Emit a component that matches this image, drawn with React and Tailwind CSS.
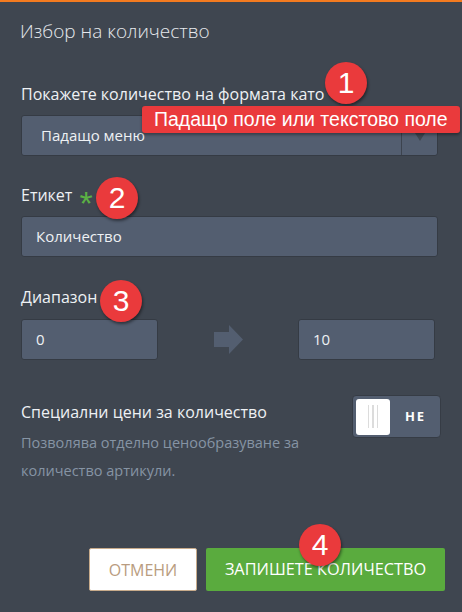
import React from "react";

function Badge({ n, className }) {
  return (
    <div
      className={
        "absolute w-[42px] h-[42px] rounded-full bg-[#ea3a3c] text-white flex items-center justify-center text-[30px] leading-none shadow-[1px_2px_3px_rgba(0,0,0,0.45)] " +
        className
      }
      style={{ fontFamily: '"Liberation Sans", Arial, sans-serif' }}
    >
      {n}
    </div>
  );
}

export default function App() {
  return (
    <div
      className="relative w-[462px] h-[612px] bg-[#3f4650] border-t-2 border-[#f47b20] overflow-hidden text-[#eef1f4]"
      style={{ fontFamily: '"Open Sans", "Noto Sans", sans-serif' }}
    >
      <div className="px-[21px]">
        <div className="pt-[15px] h-[62px] text-[19px] font-light text-[#e6e9ed] -ml-[1px]">
          Избор на количество
        </div>

        <div className="mt-[17px] text-[16px] h-[26px] leading-[26px]">
          Покажете количество на формата като
        </div>
        <div className="mt-[8px] h-[41px] w-[417px] flex rounded-[3px] bg-[#535e70] border border-[#353b44]">
          <div className="flex-1 flex items-center pl-[19px] text-[15px]">Падащо меню</div>
          <div className="w-[36px] border-l border-[#3c434e] flex items-center justify-center">
            <div className="w-0 h-0 border-l-[5px] border-r-[5px] border-t-[8px] border-l-transparent border-r-transparent border-t-[#3f4650] mt-[3px]" />
          </div>
        </div>

        <div className="mt-[26px] h-[26px] flex items-center text-[16px]">
          <span>Етикет</span>
          <span
            className="ml-[7px] text-[#5bb044] text-[34px] leading-none mt-[16px]"
            style={{ fontFamily: '"Liberation Sans", sans-serif' }}
          >
            *
          </span>
        </div>
        <div className="mt-[8px] h-[41px] w-[417px] flex items-center pl-[14px] rounded-[3px] bg-[#535e70] border border-[#353b44] text-[15px]">
          Количество
        </div>

        <div className="mt-[27px] h-[26px] flex items-center text-[16px]">Диапазон</div>
        <div className="mt-[9px] flex items-center">
          <div className="h-[41px] w-[137px] flex items-center pl-[14px] rounded-[3px] bg-[#535e70] border border-[#353b44] text-[15px]">
            0
          </div>
          <div className="ml-[56px] w-[29px] h-[29px]">
            <svg width="29" height="29" viewBox="0 0 29 29">
              <path d="M0 7 H15 V0 L29 14.5 L15 29 V22 H0 Z" fill="#535e70" />
            </svg>
          </div>
          <div className="ml-[55px] h-[41px] w-[137px] flex items-center pl-[14px] rounded-[3px] bg-[#535e70] border border-[#353b44] text-[15px]">
            10
          </div>
        </div>

        <div className="mt-[37px] flex justify-between">
          <div>
            <div className="h-[26px] leading-[26px] text-[16px] mt-[2px]">Специални цени за количество</div>
            <div className="text-[14.5px] leading-[28px] text-[#8694a4] mt-[4px]">
              Позволява отделно ценообразуване за
              <br />
              количество артикули.
            </div>
          </div>
          <div className="w-[89px] h-[43px] rounded-[4px] bg-[#535e70] border border-[#363c45] flex items-center pl-[3px] mt-[-2px]">
            <div className="w-[34px] h-[36px] bg-white rounded-[3px] flex items-center justify-center gap-[3px]">
              <div className="w-[1.5px] h-[23px] bg-[#dcdcdc]" />
              <div className="w-[1.5px] h-[23px] bg-[#dcdcdc]" />
              <div className="w-[1.5px] h-[23px] bg-[#dcdcdc]" />
            </div>
            <div className="flex-1 text-center text-[13px] font-bold tracking-[2px] text-white pl-[1px]">НЕ</div>
          </div>
        </div>

        <div className="mt-[63px] flex justify-end gap-[9px] mr-[-4px]">
          <button className="w-[108px] h-[43px] bg-white border border-[#c8ab8b] rounded-[2px] text-[#b99c80] text-[16px]">
            ОТМЕНИ
          </button>
          <button className="w-[239px] h-[43px] bg-[#5aab3e] rounded-[2px] text-white text-[16.3px]">
            ЗАПИШЕТЕ КОЛИЧЕСТВО
          </button>
        </div>
      </div>

      <Badge n="1" className="left-[325px] top-[60px]" />
      <div
        className="absolute left-[142px] top-[104px] w-[318px] h-[27px] bg-[#ea3a3c] rounded-[3px] text-white text-[19.5px] leading-[27px] pl-[12px] shadow-[0_2px_3px_rgba(0,0,0,0.35)] whitespace-nowrap"
        style={{ fontFamily: '"Liberation Sans", Arial, sans-serif' }}
      >
        Падащо поле или текстово поле
      </div>
      <Badge n="2" className="left-[96px] top-[175px]" />
      <Badge n="3" className="left-[100px] top-[278px]" />
      <Badge n="4" className="left-[299px] top-[522px]" />
    </div>
  );
}
